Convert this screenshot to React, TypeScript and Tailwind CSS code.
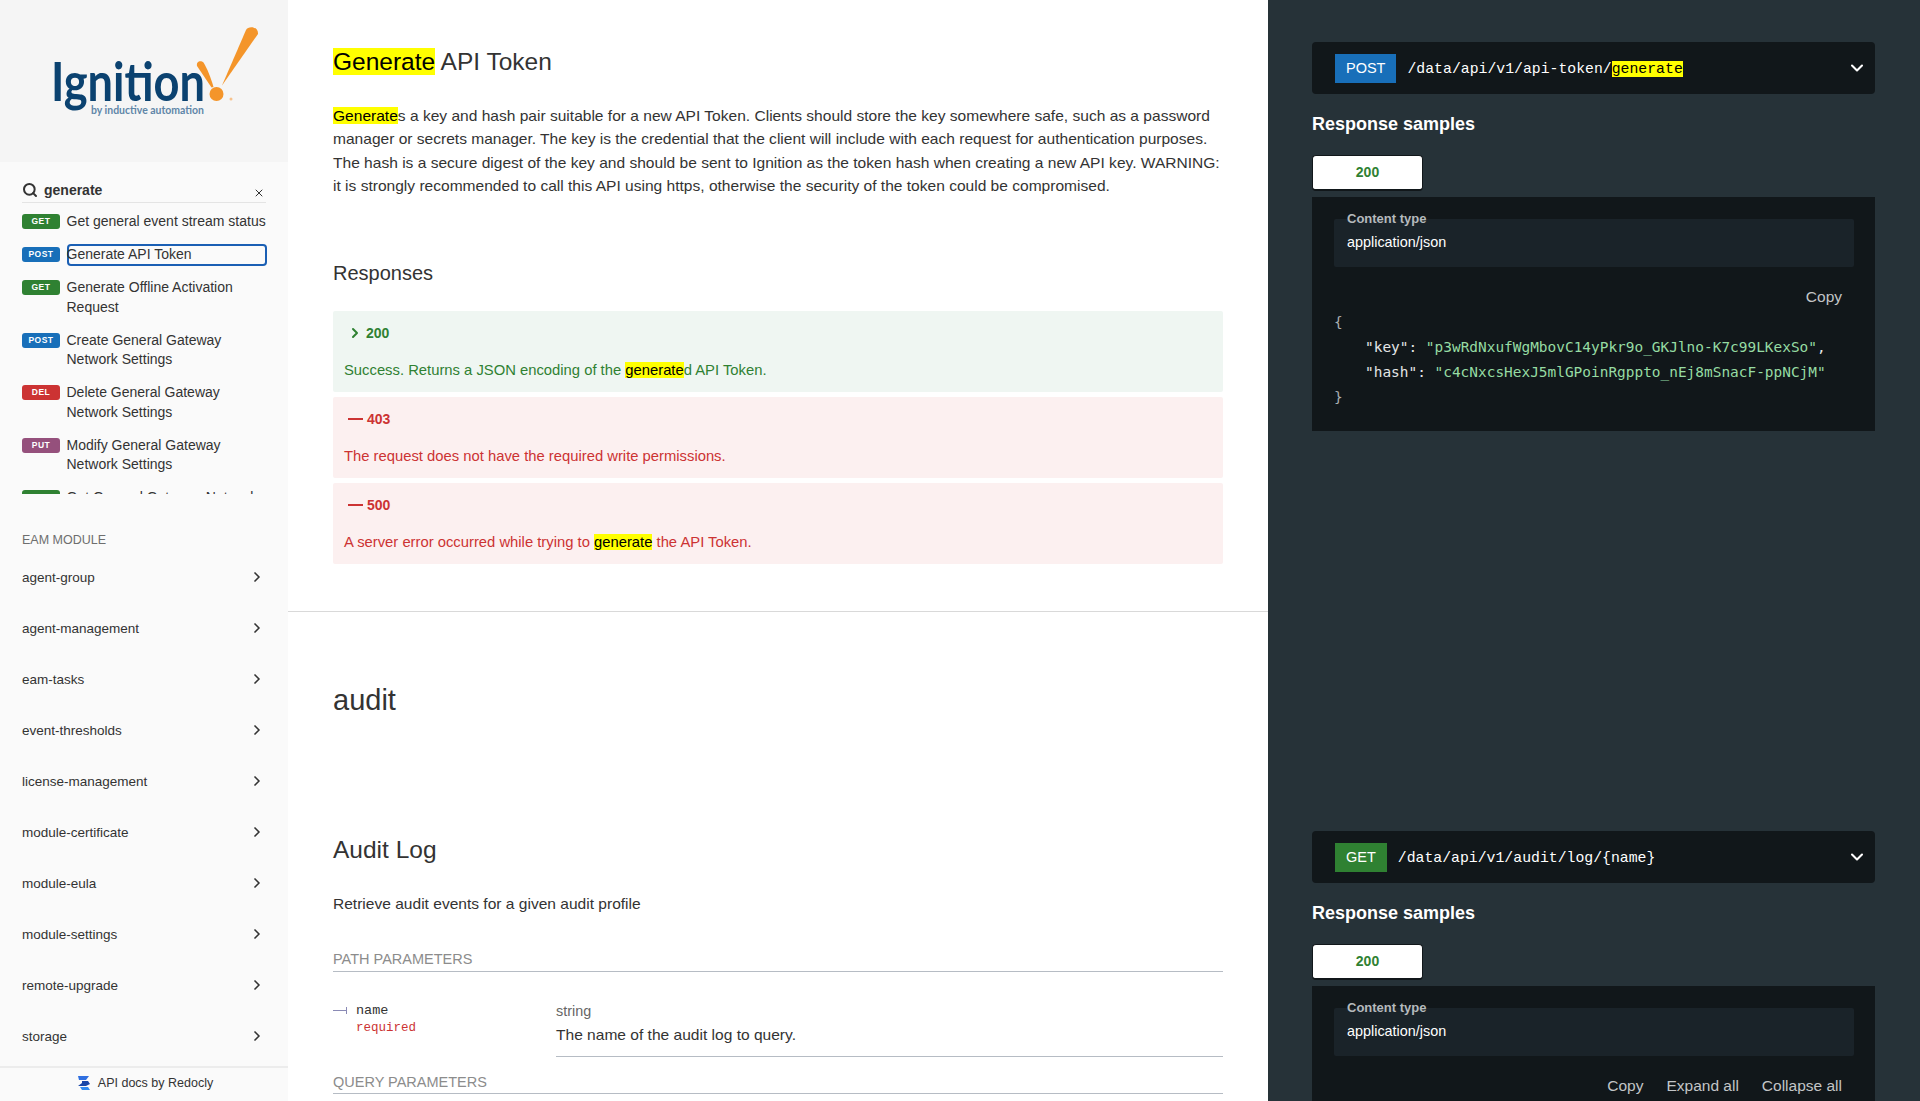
import { ChevronDown, ChevronRight, Search, X } from 'lucide-react';

const sans = "font-['Liberation_Sans',Arial,sans-serif]";

const badgeColors: Record<string, string> = {
  GET: 'bg-[#2f8132]',
  POST: 'bg-[#186fb9]',
  DEL: 'bg-[#cc3333]',
  PUT: 'bg-[#95507c]',
};

const results = [
  { method: 'GET', title: 'Get general event stream status' },
  { method: 'POST', title: 'Generate API Token', active: true },
  { method: 'GET', title: 'Generate Offline Activation Request' },
  { method: 'POST', title: 'Create General Gateway Network Settings' },
  { method: 'DEL', title: 'Delete General Gateway Network Settings' },
  { method: 'PUT', title: 'Modify General Gateway Network Settings' },
  { method: 'GET', title: 'Get General Gateway Network Settings' },
];

const modules = [
  'agent-group',
  'agent-management',
  'eam-tasks',
  'event-thresholds',
  'license-management',
  'module-certificate',
  'module-eula',
  'module-settings',
  'remote-upgrade',
  'storage',
];

function Mark({ children }: { children: React.ReactNode }) {
  return <mark className="bg-[#ffff00] text-black">{children}</mark>;
}

function Logo() {
  return (
    <svg width="288" height="162" viewBox="0 0 288 162">
      <text x="51" y="101" fontFamily="Lato, sans-serif" fontSize="53" fontWeight="700" fill="#0b4270" textLength="154" lengthAdjust="spacingAndGlyphs">
        Ignition
      </text>
      <text x="91" y="114" fontFamily="Lato, sans-serif" fontSize="10.5" fontWeight="700" fill="#5f86a8" textLength="113" lengthAdjust="spacingAndGlyphs">
        by inductive automation
      </text>
      <path d="M246 30 C248 25.500 258.500 26 258 34 L222 85.500 Z" fill="#f4952a" />
      <path d="M197 66 C196 61 201 60 203.500 62.500 C207 68 211 78 213.500 87 L211.500 87.500 Z" fill="#f4952a" />
      <circle cx="216.500" cy="94" r="7" fill="#f4952a" />
      <circle cx="231" cy="99" r="1.500" fill="#f7c28d" />
    </svg>
  );
}

function Sidebar() {
  return (
    <aside className="flex h-full w-[288px] shrink-0 flex-col bg-[#fafafa] text-[#333333]">
      <div className="h-[162px] shrink-0 bg-[#f5f5f5]">
        <Logo />
      </div>
      <div className="mx-[22px] mt-[16px] flex h-[25px] items-center border-b border-[#e4e4e4]">
        <Search size={16} strokeWidth={3} className="shrink-0 text-[#333333]" />
        <span className="ml-[6px] grow text-[14px] font-bold leading-[20px]">generate</span>
        <X size={12} strokeWidth={2} className="mt-[6px] mr-[1px] text-[#333333]" />
      </div>
      <div className="mt-[9px] h-[282px] shrink-0 overflow-hidden pl-[22px] pr-[21px]">
        {results.map((r) => (
          <div key={r.title} className="mb-[13.500px] flex items-start">
            <span className={`mt-[2px] flex h-[15px] w-[38px] shrink-0 items-center justify-center rounded-[3px] text-[8.500px] font-bold tracking-[0.5px] text-white ${badgeColors[r.method]}`}>
              {r.method}
            </span>
            <span className={`ml-[6.500px] grow text-[14px] leading-[19.500px] ${r.active ? '-my-[1px] rounded-[4px] py-[1px] shadow-[inset_0_0_0_2px_#1a5fb4]' : ''}`}>
              {r.title}
            </span>
          </div>
        ))}
      </div>
      <div className="mt-[37px] ml-[22px] text-[12.500px] leading-[18px] text-[#6e6e6e]">EAM MODULE</div>
      <div className="mt-[4px] min-h-0 grow">
        {modules.map((m) => (
          <div key={m} className="flex h-[51px] items-center justify-between pl-[22px] pr-[23px]">
            <span className="text-[13.500px]">{m}</span>
            <ChevronRight size={16} strokeWidth={2.5} className="-mt-[3px] text-[#333333]" />
          </div>
        ))}
      </div>
      <div className="flex h-[35px] shrink-0 items-center justify-center gap-[7px] border-t-2 border-[#ececec] pb-[3px] pl-[2px] text-[12.500px]">
        <svg width="14" height="16" viewBox="0 0 14 16">
          <path d="M1 1 H12 L9 5 H2 Z" fill="#2f6fe0" />
          <path d="M5 6 H11 L13 9 L9 11 H1 L5 8 Z" fill="#1746a8" />
          <path d="M3 12 H11 L13 15 H5 Z" fill="#2f8af0" />
        </svg>
        <span>API docs by Redocly</span>
      </div>
    </aside>
  );
}

function ResponseRow({
  code,
  ok,
  children,
}: {
  code: string;
  ok?: boolean;
  children: React.ReactNode;
}) {
  return (
    <div className={`mb-[5px] h-[81px] rounded-[2px] pl-[11px] pt-[12px] ${ok ? 'bg-[#eff6f2] text-[#2f8132]' : 'bg-[#fcf0f0] text-[#cc3333]'}`}>
      <div className="flex h-[20px] items-center text-[14px] font-bold leading-[20px]">
        {ok ? (
          <ChevronRight size={16} strokeWidth={3} className="mr-[3px] ml-[3px]" />
        ) : (
          <span className="mr-[4px] ml-[4px] h-[2px] w-[15px] bg-[#cc3333]" />
        )}
        {code}
      </div>
      <p className="mt-[17px] text-[14.800px] leading-[20px]">{children}</p>
    </div>
  );
}

function Middle() {
  return (
    <main className="h-full w-[980px] shrink-0 overflow-hidden bg-white text-[#333333]">
      <section className="h-[612px] border-b border-[#d9d9d9] pl-[45px] pr-[45px] pt-[44px]">
        <h2 className="text-[24.500px] leading-[36px]">
          <Mark>Generate</Mark> API Token
        </h2>
        <p className="mt-[24px] text-[15.560px] leading-[23.400px]">
          <Mark>Generate</Mark>s a key and hash pair suitable for a new API Token. Clients should store the key somewhere safe, such as a password manager or secrets manager. The key is the credential that the client will include with each request for authentication purposes. The hash is a secure digest of the key and should be sent to Ignition as the token hash when creating a new API key. WARNING: it is strongly recommended to call this API using https, otherwise the security of the token could be compromised.
        </p>
        <h3 className="mt-[61px] text-[20px] leading-[28px]">Responses</h3>
        <div className="mt-[24px]">
          <ResponseRow code="200" ok>
            Success. Returns a JSON encoding of the <Mark>generate</Mark>d API Token.
          </ResponseRow>
          <ResponseRow code="403">The request does not have the required write permissions.</ResponseRow>
          <ResponseRow code="500">
            A server error occurred while trying to <Mark>generate</Mark> the API Token.
          </ResponseRow>
        </div>
      </section>
      <section className="pl-[45px] pr-[45px] pt-[68px]">
        <h1 className="text-[29px] leading-[40px]">audit</h1>
        <h2 className="mt-[112px] text-[24.500px] leading-[36px]">Audit Log</h2>
        <p className="mt-[24px] text-[15.560px] leading-[23.400px]">Retrieve audit events for a given audit profile</p>
        <div className="mt-[34px] border-b border-[#b6bcc4] pb-[2px] text-[14.500px] leading-[20px] text-[#8c8c8c]">PATH PARAMETERS</div>
        <div className="mt-[30px] flex">
          <div className="flex w-[223px] shrink-0 font-['Liberation_Mono',monospace]">
            <span className="mt-[8px] flex h-[1px] w-[14px] items-center justify-end bg-[#8a8ab5]">
              <span className="h-[7px] w-[1px] shrink-0 bg-[#8a8ab5]" />
            </span>
            <div className="ml-[9px]">
              <div className="text-[13.500px] leading-[17px]">name</div>
              <div className="mt-[1px] text-[12.500px] leading-[17px] text-[#cc3333]">required</div>
            </div>
          </div>
          <div className="-mt-[1px] grow border-b border-[#b6bcc4] pb-[10px]">
            <div className="text-[14.400px] leading-[20px] text-[#666666]">string</div>
            <div className="mt-[2px] text-[15.560px] leading-[23px]">The name of the audit log to query.</div>
          </div>
        </div>
        <div className="mt-[15px] border-b border-[#b6bcc4] pb-[1px] text-[14.500px] leading-[20px] text-[#8c8c8c]">QUERY PARAMETERS</div>
      </section>
    </main>
  );
}

function SamplePanel({
  method,
  methodClass,
  path,
  actions,
  children,
}: {
  method: string;
  methodClass: string;
  path: React.ReactNode;
  actions: string[];
  children?: React.ReactNode;
}) {
  return (
    <div>
      <div className="flex h-[52px] items-center rounded-[4px] bg-[#11171a] pl-[23px] pr-[8px]">
        <span className={`flex h-[29px] items-center justify-center px-[11px] pt-[1px] text-[14.500px] text-white ${methodClass}`}>{method}</span>
        <span className="ml-[11px] mt-[2px] grow font-['Liberation_Mono',monospace] text-[14.800px] text-white">{path}</span>
        <ChevronDown size={20} strokeWidth={2.5} className="text-white" />
      </div>
      <div className="mt-[19px] text-[18px] font-bold leading-[22px] text-white">Response samples</div>
      <div className="mt-[20px] flex h-[36px] w-[111px] items-center justify-center rounded-[4px] border border-b-2 border-[#11171a] bg-white text-[14px] font-bold text-[#2f8132]">200</div>
      <div className="mt-[6px] bg-[#11171a] pb-[21px] pl-[22px] pr-[21px]">
        <div className="relative top-[22px] mb-[22px] h-[48px] rounded-[2px] bg-[#1a2329] pl-[13px] pt-[12px]">
          <div className="absolute -top-[9px] left-[13px] text-[13px] font-bold leading-[18px] text-[#b5b9bc]">Content type</div>
          <div className="text-[14.400px] leading-[22px] text-white">application/json</div>
        </div>
        <div className="flex justify-end gap-[23px] pr-[12px] pt-[19px] text-[15.500px] leading-[22px] text-[#c2c5c7]">
          {actions.map((a) => (
            <span key={a}>{a}</span>
          ))}
        </div>
        {children}
      </div>
    </div>
  );
}

function RightPanel() {
  return (
    <aside className="min-w-0 grow overflow-hidden bg-[#263238] pl-[44px] pr-[45px] pt-[42px]">
      <SamplePanel
        method="POST"
        methodClass="bg-[#186fb9]"
        path={
          <>
            /data/api/v1/api-token/<Mark>generate</Mark>
          </>
        }
        actions={['Copy']}
      >
        <div className="mt-[2px] font-['DejaVu_Sans_Mono',monospace] text-[14.450px] leading-[25px] text-[#e4e6e7]">
          <div className="text-[#a9aeb0]">{'{'}</div>
          <div className="pl-[31px]">
            &quot;key&quot;: <span className="text-[#96dca3]">&quot;p3wRdNxufWgMbovC14yPkr9o_GKJlno-K7c99LKexSo&quot;</span>,
          </div>
          <div className="pl-[31px]">
            &quot;hash&quot;: <span className="text-[#96dca3]">&quot;c4cNxcsHexJ5mlGPoinRgppto_nEj8mSnacF-ppNCjM&quot;</span>
          </div>
          <div className="text-[#a9aeb0]">{'}'}</div>
        </div>
      </SamplePanel>
      <div className="mt-[400px]">
        <SamplePanel
          method="GET"
          methodClass="bg-[#2f8132]"
          path="/data/api/v1/audit/log/{name}"
          actions={['Copy', 'Expand all', 'Collapse all']}
        />
      </div>
    </aside>
  );
}

export default function App() {
  return (
    <div className={`flex h-screen w-full overflow-hidden ${sans}`}>
      <Sidebar />
      <Middle />
      <RightPanel />
    </div>
  );
}
